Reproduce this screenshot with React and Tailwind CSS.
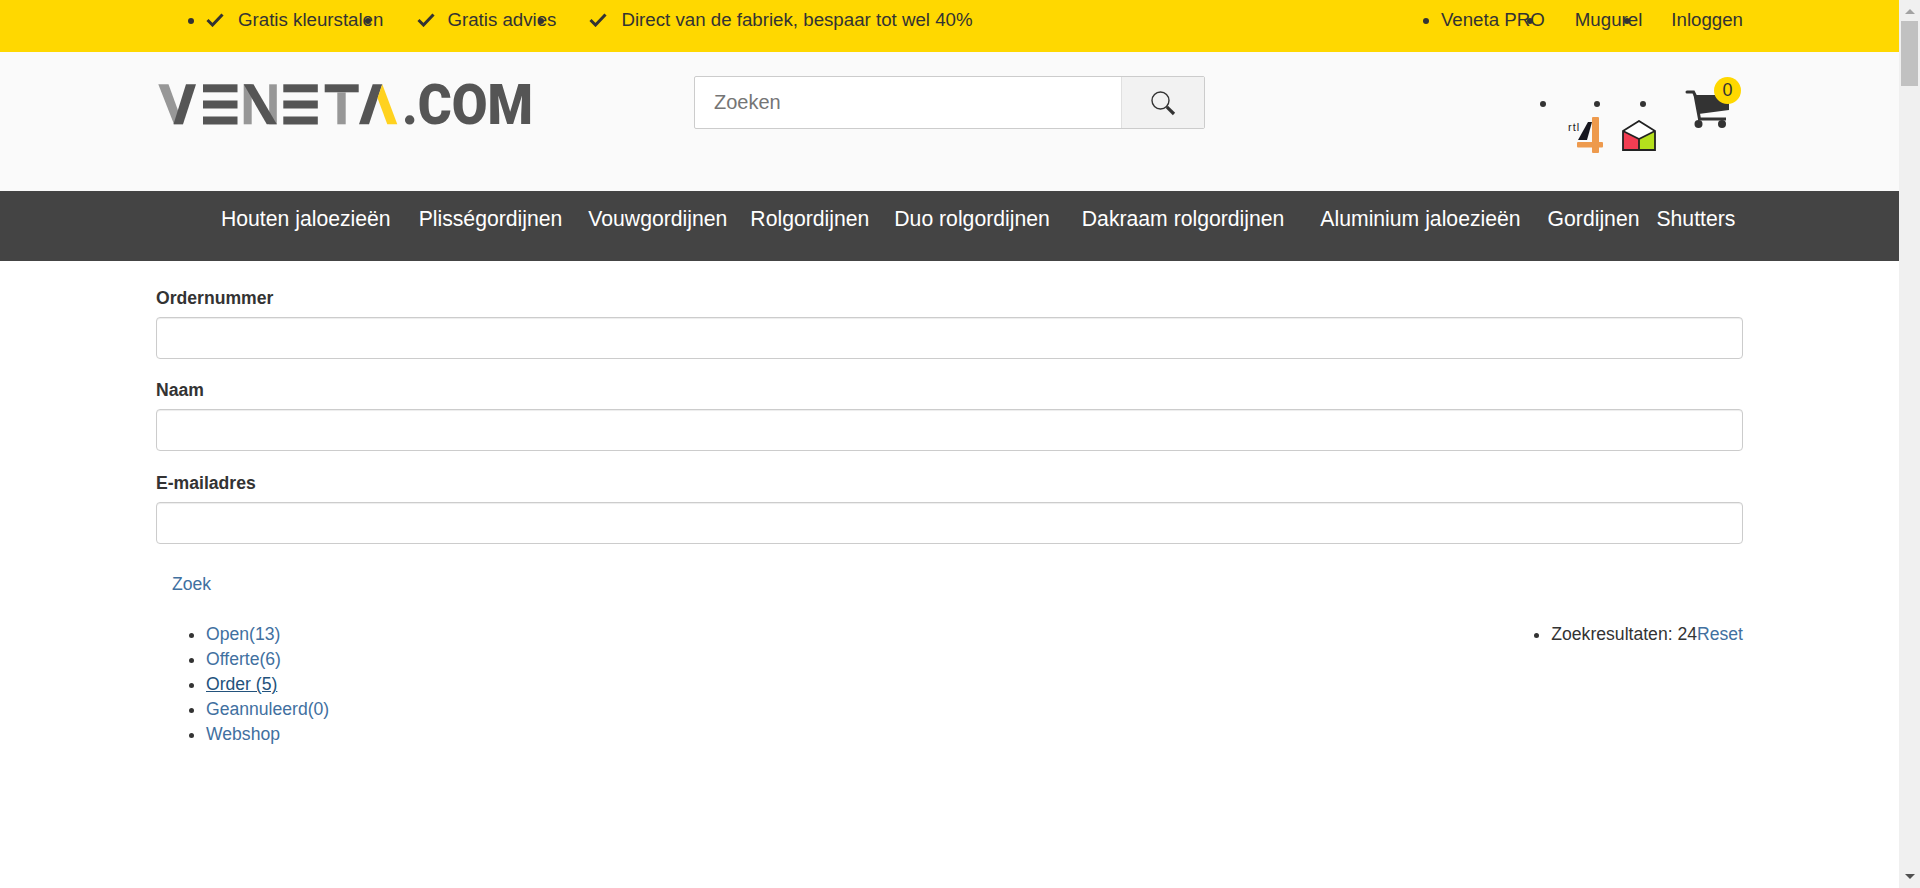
const navItems = [
  ["Houten jaloezieën", "ml-[221px]"],
  ["Plisségordijnen", "ml-[28px]"],
  ["Vouwgordijnen", "ml-[26px]"],
  ["Rolgordijnen", "ml-[23px]"],
  ["Duo rolgordijnen", "ml-[25px]"],
  ["Dakraam rolgordijnen", "ml-[32px]"],
  ["Aluminium jaloezieën", "ml-[36px]"],
  ["Gordijnen", "ml-[27px]"],
  ["Shutters", "ml-[17px]"],
];

function Check() {
  return (
    <svg width="18" height="15" viewBox="0 0 18 15" className="inline-block align-[-1px]">
      <path d="M1.5 8 L6.5 13 L16.5 2.5" fill="none" stroke="#333" strokeWidth="3" />
    </svg>
  );
}

function Logo() {
  return (
    <svg width="390" height="80" viewBox="158 60 390 80" className="block">
      <polygon points="158.3,84.3 168.5,84.3 183,124.3 174,124.3" fill="#979797" />
      <polygon points="186,84.3 196,84.3 183,124.3 173.5,124.3" fill="#555" />
      <rect x="203" y="84.3" width="34.5" height="8" fill="#555" />
      <rect x="203" y="100.5" width="34.5" height="8" fill="#555" />
      <rect x="203" y="116.5" width="34.5" height="8" fill="#555" />
      <rect x="243.7" y="84.3" width="8" height="40" fill="#979797" />
      <rect x="269.2" y="84.3" width="7.6" height="40" fill="#979797" />
      <polygon points="243.7,84.3 253.5,84.3 276.8,124.3 266.8,124.3" fill="#555" />
      <rect x="283.3" y="84.3" width="34.5" height="8" fill="#555" />
      <rect x="283.3" y="100.5" width="34.5" height="8" fill="#555" />
      <rect x="283.3" y="116.5" width="34.5" height="8" fill="#555" />
      <rect x="324.7" y="84.3" width="34" height="8" fill="#555" />
      <rect x="337.3" y="92.3" width="8.4" height="32" fill="#979797" />
      <polygon points="372.7,84.3 382.3,84.3 369,124.3 359,124.3" fill="#555" />
      <polygon points="382.3,84.3 397.3,124.3 387.3,124.3 377.5,98" fill="#ffd21f" />
      <text x="402" y="124.3" fill="#555" fontFamily="Roboto, sans-serif" fontWeight="900" fontSize="56" textLength="131" lengthAdjust="spacingAndGlyphs">.COM</text>
    </svg>
  );
}

function SearchIcon() {
  return (
    <svg width="26" height="26" viewBox="0 0 26 26">
      <circle cx="10.5" cy="10.5" r="8.5" fill="none" stroke="#333" strokeWidth="1.4" />
      <path d="M16.8 16.8 L24 24" stroke="#333" strokeWidth="3.2" />
    </svg>
  );
}

function Cart() {
  return (
    <svg width="46" height="38" viewBox="0 0 46 38" className="block">
      <path d="M2 2 H8.5 L10 5" fill="none" stroke="#333" strokeWidth="3" strokeLinecap="round" />
      <path d="M9.5 5 L44 5 L44 20 L13.5 24 Z" fill="#333" />
      <path d="M10 5 L14.5 29 H41" fill="none" stroke="#333" strokeWidth="3" />
      <circle cx="13.5" cy="34" r="4" fill="#333" />
      <circle cx="37" cy="34" r="4" fill="#333" />
    </svg>
  );
}

function Rtl4() {
  return (
    <div className="relative w-[36px] h-[38px]">
      <svg width="36" height="38" viewBox="0 0 36 38" className="block">
        <polygon points="10,23 19,23 24,5 20,5" fill="#17171f" />
        <rect x="24" y="0" width="7" height="36" rx="1" fill="#ee9a4d" />
        <rect x="9" y="25" width="26" height="5.5" rx="1" fill="#ee9a4d" />
      </svg>
      <span className="absolute left-0 top-[5px] text-[11px] leading-[11px] tracking-[1px] text-[#222]">rtl</span>
    </div>
  );
}

function BoxIcon() {
  return (
    <svg width="34" height="31" viewBox="0 0 34 31" className="block">
      <polygon points="17,1 33,11 17,19 1,11" fill="#fff" />
      <polygon points="1,11 17,19 17,30 1,30" fill="#f23d52" />
      <polygon points="33,11 17,19 17,30 33,30" fill="#b5e01d" />
      <path d="M1 30 V11 L17 1 L33 11 V30 Z M1 11 L17 19 L33 11 M17 19 V30" fill="none" stroke="#222" strokeWidth="1.8" />
    </svg>
  );
}

function Field({ label, className }) {
  return (
    <div className={className}>
      <label className="block text-[17.6px] font-bold leading-[25px] text-[#333] mb-[6px]">{label}</label>
      <input
        type="text"
        className="block w-full h-[42px] bg-white border border-[#ccc] rounded-[4px] shadow-[inset_0_1px_1px_rgba(0,0,0,0.075)]"
      />
    </div>
  );
}

export default function App() {
  return (
    <div className="flex h-[888px] overflow-hidden bg-white text-[#333] font-['Liberation_Sans',Arial,sans-serif]">
      <div className="flex-1 min-w-0">
        <div className="h-[52px] bg-[#ffd800] flex justify-between pl-[206px] pr-[156px] text-[18.7px] leading-[40px]">
          <ul className="flex list-disc">
            <li><Check /><span className="ml-[14px]">Gratis kleurstalen</span></li>
            <li className="pl-[34px]"><Check /><span className="ml-[12px]">Gratis advies</span></li>
            <li className="pl-[33px]"><Check /><span className="ml-[14px]">Direct van de fabriek, bespaar tot wel 40%</span></li>
          </ul>
          <ul className="flex list-disc">
            <li>Veneta PRO</li>
            <li className="pl-[30px]">Mugurel</li>
            <li className="pl-[29px]">Inloggen</li>
          </ul>
        </div>

        <div className="h-[139px] bg-[#fafafa] flex items-start pl-[158px]">
          <div className="mt-[8px] w-[374px] shrink-0"><Logo /></div>
          <div className="ml-[162px] mt-[24px] w-[511px] h-[53px] shrink-0 flex bg-white border border-[#ccc] rounded-[2px]">
            <div className="flex-1 pl-[19px] text-[20px] leading-[51px] text-[#757575]">Zoeken</div>
            <div className="w-[83px] bg-[#f2f2f2] border-l border-[#e0e0e0] flex items-center justify-center">
              <SearchIcon />
            </div>
          </div>
          <ul className="list-disc flex text-[18.7px] leading-[25px] mt-[38px] ml-[353px]">
            <li className="w-[54px]">
              {"\u00a0"}
              <div className="ml-[10px] mt-[2px]"><Rtl4 /></div>
            </li>
            <li className="w-[46px]">
              {"\u00a0"}
              <div className="ml-[10px] mt-[5px]"><BoxIcon /></div>
            </li>
            <li className="w-[85px]">
              <span className="relative inline-block align-top ml-[27px]">
                <Cart />
                <span className="absolute left-[29px] top-[-13px] w-[27px] h-[27px] rounded-full bg-[#ffd800] text-center text-[18px] leading-[27px] text-[#333]">0</span>
              </span>
            </li>
          </ul>
        </div>

        <nav className="h-[70px] bg-[#444] text-white text-[21.2px] leading-[56px]">
          <ul className="flex">
            {navItems.map(([name, cls]) => (
              <li key={name} className={cls}>{name}</li>
            ))}
          </ul>
        </nav>

        <div className="pl-[156px] pr-[156px] pt-[25px] text-[17.6px]">
          <Field label="Ordernummer" />
          <Field label="Naam" className="mt-[19.2px]" />
          <Field label="E-mailadres" className="mt-[20px]" />
          <a className="block mt-[28px] ml-[16px] leading-[25px] text-[#41709f]">Zoek</a>
          <div className="flex justify-between mt-[25px] leading-[25px]">
            <ul className="list-disc pl-[50px] text-[#333]">
              <li><a className="text-[#41709f]">Open(13)</a></li>
              <li><a className="text-[#41709f]">Offerte(6)</a></li>
              <li><a className="text-[#23527c] underline">Order (5)</a></li>
              <li><a className="text-[#41709f]">Geannuleerd(0)</a></li>
              <li><a className="text-[#41709f]">Webshop</a></li>
            </ul>
            <ul className="list-disc">
              <li>Zoekresultaten: 24<a className="text-[#41709f]">Reset</a></li>
            </ul>
          </div>
        </div>
      </div>
      <aside className="w-[21px] h-full bg-[#f0f0f0] flex flex-col items-center justify-between py-[9px] relative">
        <div className="w-0 h-0 border-x-[5px] border-x-transparent border-b-[5px] border-b-[#a3a3a3]" />
        <div className="absolute left-[2px] top-[21px] w-[17px] h-[65px] bg-[#c1c1c1]" />
        <div className="w-0 h-0 border-x-[5px] border-x-transparent border-t-[5px] border-t-[#505050]" />
      </aside>
    </div>
  );
}
